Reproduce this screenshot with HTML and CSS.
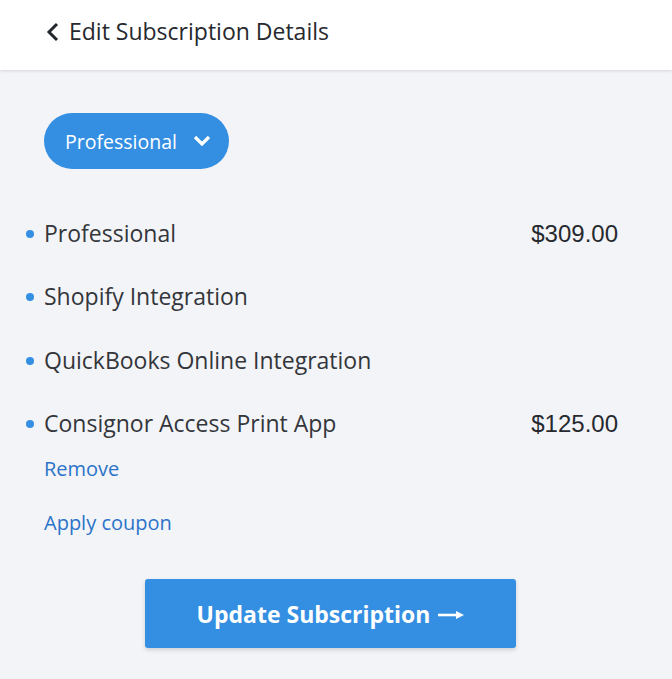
FILE: index.html
```html
<!DOCTYPE html>
<html>
<head>
<meta charset="utf-8">
<link rel="stylesheet" href="styles.css">
</head>
<body>
<header class="topbar">
  <svg class="back" width="14" height="20" viewBox="0 0 14 20"><path d="M11 2 L3 10 L11 18" fill="none" stroke="#23262b" stroke-width="3"/></svg>
  <span class="title">Edit Subscription Details</span>
</header>
<main class="content">
  <button class="plan">Professional
    <svg class="caret" width="18" height="12" viewBox="0 0 18 12"><path d="M2 2 L9 9 L16 2" fill="none" stroke="#fff" stroke-width="3.2"/></svg>
  </button>
  <ul class="items">
    <li class="item"><span class="name">Professional</span><span class="price">$309.00</span></li>
    <li class="item"><span class="name">Shopify Integration</span></li>
    <li class="item"><span class="name">QuickBooks Online Integration</span></li>
    <li class="item"><span class="name">Consignor Access Print App</span><span class="price">$125.00</span></li>
  </ul>
  <a class="link remove">Remove</a>
  <a class="link coupon">Apply coupon</a>
  <div class="actions">
    <button class="update">Update Subscription
      <svg class="arrow" width="26" height="10" viewBox="0 0 26 10"><path d="M0 5 H20" stroke="#fff" stroke-width="2.6"/><path d="M18 1 L26 5 L18 9 Z" fill="#fff"/></svg>
    </button>
  </div>
</main>
</body>
</html>
```
FILE: styles.css
```css
* { box-sizing: border-box; }
html, body { margin: 0; padding: 0; }
body {
  background: #f3f4f8;
  font-family: "Open Sans", "Noto Sans", sans-serif;
  color: #33363b;
  width: 672px;
  height: 679px;
  overflow: hidden;
}
.topbar {
  background: #fff;
  height: 70px;
  display: flex;
  align-items: center;
  padding-left: 46px;
  gap: 9px;
  box-shadow: 0 1px 3px rgba(0,0,0,0.12);
  position: relative;
}
.back { margin-top: -7px; }
.title {
  font-size: 23px;
  color: #26292e;
  margin-top: -8px;
}
.content { padding: 43px 0 0 44px; }
.plan {
  background: #348fe2;
  color: #fff;
  border: none;
  border-radius: 28px;
  height: 56px;
  padding: 0 18px 0 21px;
  font-family: inherit;
  font-size: 19.5px;
  display: flex;
  align-items: center;
  gap: 16px;
}
.items {
  list-style: none;
  margin: 32px 0 0 0;
  padding: 0;
  width: 574px;
}
.item {
  display: flex;
  justify-content: space-between;
  align-items: center;
  height: 63.5px;
  position: relative;
  font-size: 23px;
}
.item::before {
  content: "";
  position: absolute;
  left: -18px;
  top: 50%;
  width: 8px;
  height: 8px;
  margin-top: -3px;
  border-radius: 50%;
  background: #348fe2;
}
.price {
  font-family: "Liberation Sans", Arial, sans-serif;
  font-size: 24px;
  color: #26292e;
  margin-top: 2px;
}
.link {
  display: block;
  color: #2b73c8;
  font-size: 20px;
}
.remove { margin-top: 0; }
.coupon { margin-top: 27px; }
.actions {
  display: flex;
  padding-left: 101px;
  margin-top: 43px;
}
.update {
  width: 371px;
  height: 69px;
  background: #348fe2;
  color: #fff;
  border: none;
  border-radius: 3px;
  box-shadow: 0 2px 4px rgba(0,0,0,0.15);
  font-family: inherit;
  font-weight: 700;
  font-size: 23px;
  display: flex;
  align-items: center;
  justify-content: center;
  gap: 8px;
}
.arrow { margin-top: 3px; }
```
